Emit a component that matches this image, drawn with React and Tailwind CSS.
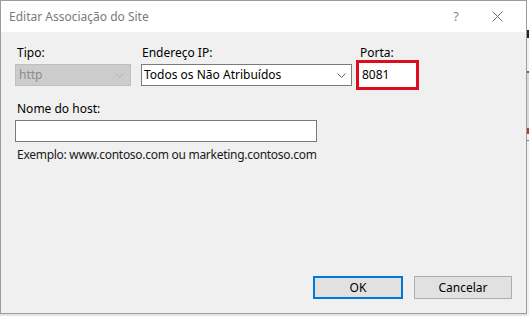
import React from "react";

const font = { fontFamily: '"Noto Sans", "Open Sans", sans-serif' };

function Chevron({ color = "#606060" }) {
  return (
    <svg width="9" height="5" viewBox="0 0 9 5" className="shrink-0">
      <path d="M0.5 0.5 L4.5 4.5 L8.5 0.5" fill="none" stroke={color} strokeWidth="1" />
    </svg>
  );
}

export default function App() {
  return (
    <div className="w-[529px] h-[316px] bg-[#e4e4e4] flex items-start overflow-hidden" style={font}>
      <div className="w-[527px] h-[314px] border border-[#9c9c9c] bg-[#f0f0f0] flex flex-col shrink-0">
        {/* Title bar */}
        <div className="h-[31px] bg-white flex items-center shrink-0">
          <span className="ml-[8px] text-[12px] text-[#7a7a7a] leading-none">Editar Associação do Site</span>
          <span className="ml-auto mr-[33px] text-[13px] text-[#8a8a8a] leading-none">?</span>
          <svg width="11" height="11" viewBox="0 0 11 11" className="mr-[23px]">
            <path d="M0.5 0.5 L10.5 10.5 M10.5 0.5 L0.5 10.5" stroke="#6a6a6a" strokeWidth="1" />
          </svg>
        </div>
        {/* Content */}
        <div className="flex-1 flex flex-col pl-[14px] pt-[13px] text-[12px] text-black leading-[16px]">
          <div className="flex items-start">
            <div className="flex flex-col w-[116px]">
              <span className="ml-[2px]">Tipo:</span>
              <div className="mt-[3px] h-[22px] bg-[#cccccc] border border-[#bfbfbf] flex items-center pl-[3px] pr-[6px]">
                <span className="text-[#8d8d8d] flex-1">http</span>
                <Chevron color="#b0b0b0" />
              </div>
            </div>
            <div className="flex flex-col w-[211px] ml-[10px]">
              <span className="ml-[1px]">Endereço IP:</span>
              <div className="mt-[3px] h-[22px] bg-white border border-[#7a7a7a] flex items-center pl-[2px] pr-[5px]">
                <span className="flex-1">Todos os Não Atribuídos</span>
                <Chevron />
              </div>
            </div>
            <div className="flex flex-col ml-[4px]">
              <span className="ml-[4px]">Porta:</span>
              <div className="mt-[-1px] w-[63px] h-[30px] border-[3px] border-[#dc0d1e] bg-white flex items-center pl-[3px]">
                <span>8081</span>
              </div>
            </div>
          </div>
          <span className="mt-[11px] ml-[2px]">Nome do host:</span>
          <div className="mt-[3px] w-[302px] h-[22px] bg-white border border-[#7a7a7a]"></div>
          <span className="mt-[5px] ml-[2px] text-[#1a1a1a] tracking-[-0.28px]">Exemplo: www.contoso.com ou marketing.contoso.com</span>
          <div className="mt-auto mb-[14px] flex justify-end pr-[14px] gap-[11px]">
            <div className="w-[90px] h-[23px] border-2 border-[#0078d7] bg-[#e1e1e1] flex items-center justify-center">OK</div>
            <div className="w-[98px] h-[23px] border border-[#adadad] bg-[#e1e1e1] flex items-center justify-center">Cancelar</div>
          </div>
        </div>
      </div>
      <div className="w-[2px] h-[316px] flex flex-col bg-[#f0f0f0] shrink-0">
        <div className="h-[30px] bg-white"></div>
        <div className="h-[8px] bg-[#222]"></div>
        <div className="h-[33px]"></div>
        <div className="h-[2px] bg-[#1f6fb5]"></div>
        <div className="h-[55px] bg-[#dadada]"></div>
        <div className="h-[6px] bg-[#c0392b]"></div>
        <div className="h-[6px]"></div>
        <div className="h-[1px] bg-[#777]"></div>
      </div>
    </div>
  );
}
